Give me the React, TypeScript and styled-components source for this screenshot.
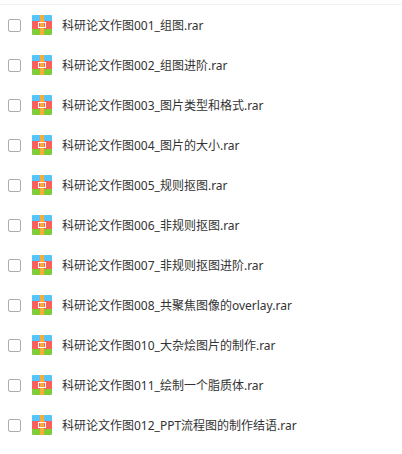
import React from 'react';
import styled, { createGlobalStyle } from 'styled-components';

const GlobalStyle = createGlobalStyle`
  body { margin: 0; background: #fff; }
`;

const Page = styled.main`
  padding-top: 4px;
`;

const FileList = styled.ul`
  list-style: none;
  margin: 0;
  padding: 0 0 8px;
  border-top: 1px solid #f2f2f2;
`;

const FileRow = styled.li`
  display: flex;
  align-items: center;
  height: 40px;
  padding-left: 8px;
`;

const FileLabel = styled.label`
  display: flex;
  align-items: center;
`;

const CheckBox = styled.input`
  appearance: none;
  box-sizing: border-box;
  width: 13px;
  height: 13px;
  margin: 0 11px 0 0;
  border: 1px solid #adadad;
  border-radius: 2px;
  background: #fff;
  &:checked { background: #3b8cff; }
`;

const ArchiveImage = styled.svg`
  display: block;
  width: 20px;
  height: 20px;
  margin-right: 10px;
`;

const FileName = styled.span`
  padding-top: 2px;
  font: 12px/20px "Noto Sans", "Noto Sans CJK SC", sans-serif;
  color: #333;
  white-space: nowrap;
`;

const ArchiveIcon = () => (
  <ArchiveImage viewBox="0 0 20 20" aria-hidden="true">
    <path d="M1 0h18a1 1 0 0 1 1 1v5H0V1a1 1 0 0 1 1-1z" fill="#55c5f8" />
    <path d="M0 6h20v8H0z" fill="#fb5f5c" />
    <path d="M0 14h20v5a1 1 0 0 1-1 1H1a1 1 0 0 1-1-1z" fill="#80cc38" />
    <path d="M8 0h4v20H8z" fill="#fcac38" />
    <rect x="6.5" y="7.5" width="7" height="5" fill="none" stroke="#fff" />
  </ArchiveImage>
);

const files = [
  '科研论文作图001_组图.rar',
  '科研论文作图002_组图进阶.rar',
  '科研论文作图003_图片类型和格式.rar',
  '科研论文作图004_图片的大小.rar',
  '科研论文作图005_规则抠图.rar',
  '科研论文作图006_非规则抠图.rar',
  '科研论文作图007_非规则抠图进阶.rar',
  '科研论文作图008_共聚焦图像的overlay.rar',
  '科研论文作图010_大杂烩图片的制作.rar',
  '科研论文作图011_绘制一个脂质体.rar',
  '科研论文作图012_PPT流程图的制作结语.rar',
];

export default function App() {
  return (
    <Page>
      <GlobalStyle />
      <FileList>
        {files.map((name) => (
          <FileRow key={name}>
            <FileLabel>
              <CheckBox type="checkbox" />
              <ArchiveIcon />
              <FileName>{name}</FileName>
            </FileLabel>
          </FileRow>
        ))}
      </FileList>
    </Page>
  );
}
